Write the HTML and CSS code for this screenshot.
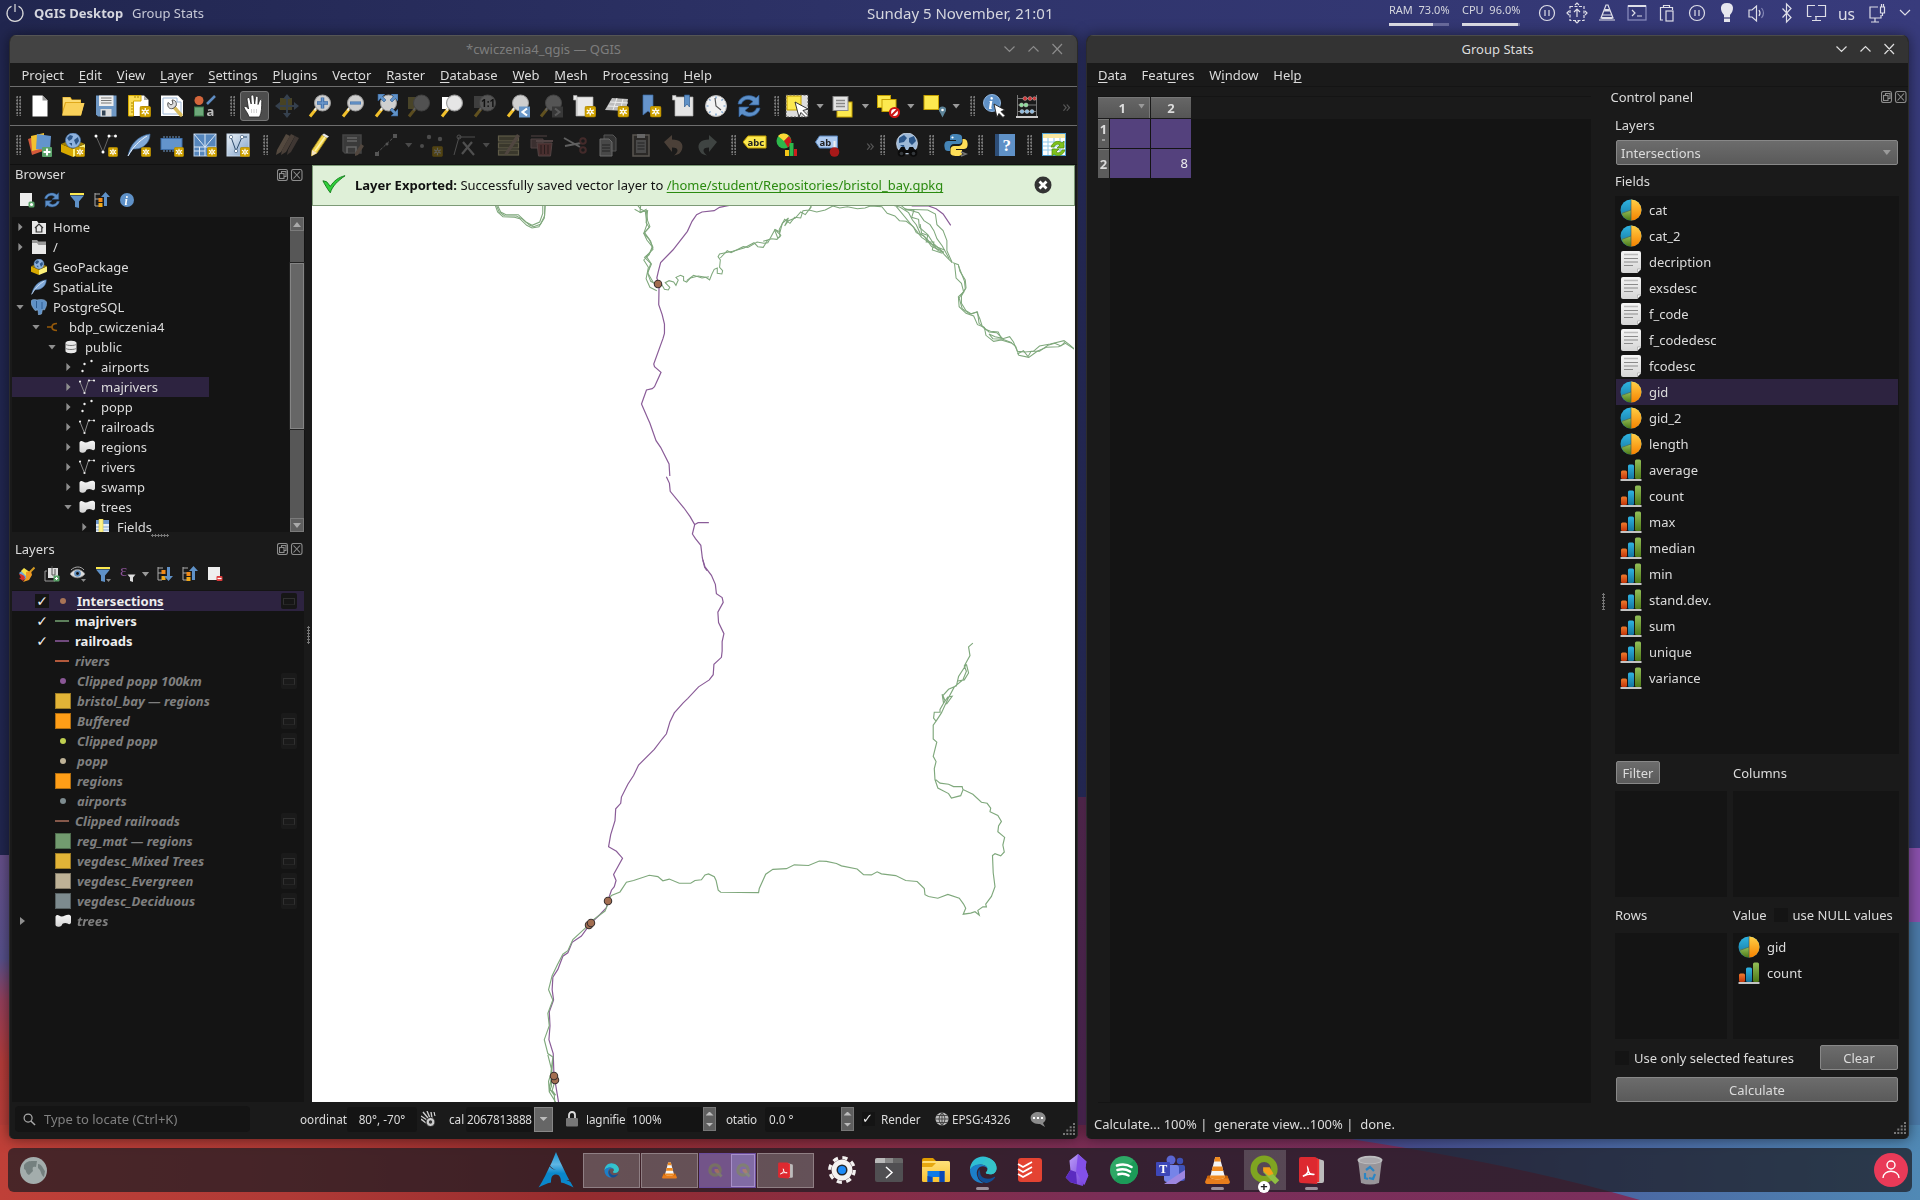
FILE: index.html
```html
<!DOCTYPE html>
<html lang="en">
<head>
<meta charset="utf-8">
<title>Desktop</title>
<link rel="stylesheet" href="styles.css">
</head>
<body>
<svg class="wallpaper" viewBox="0 0 1920 1200" preserveAspectRatio="none">
  <defs>
    <linearGradient id="w1" x1="0" y1="0" x2="1" y2="0"><stop offset="0" stop-color="#21264f"/><stop offset=".5" stop-color="#2f346b"/><stop offset="1" stop-color="#383b7c"/></linearGradient>
    <linearGradient id="w2" x1="0" y1="0" x2="0" y2="1"><stop offset="0" stop-color="#66508a"/><stop offset=".3" stop-color="#57518c"/><stop offset=".42" stop-color="#94405c"/><stop offset=".6" stop-color="#b53c3a"/><stop offset="1" stop-color="#bc4238"/></linearGradient>
    <linearGradient id="w3" x1="0" y1="0" x2="1" y2="0"><stop offset="0" stop-color="#bf4038"/><stop offset=".15" stop-color="#b03a36"/><stop offset=".3" stop-color="#962c2e"/><stop offset=".58" stop-color="#7a2e58"/><stop offset=".85" stop-color="#7b2f5c"/></linearGradient>
    <linearGradient id="w4" x1="0" y1="0" x2="1" y2="0"><stop offset="0" stop-color="#444082"/><stop offset=".5" stop-color="#4a66a2"/><stop offset="1" stop-color="#5089b5"/></linearGradient>
    <linearGradient id="w5" x1="0" y1="0" x2="0" y2="1"><stop offset="0" stop-color="#683263"/><stop offset=".8" stop-color="#5d2f65"/><stop offset="1" stop-color="#702848"/></linearGradient>
    <linearGradient id="pieO" x1="0" y1="0" x2="0" y2="1"><stop offset="0" stop-color="#ffcf45"/><stop offset="1" stop-color="#f58200"/></linearGradient>
    <linearGradient id="pieB" x1="0" y1="0" x2="0" y2="1"><stop offset="0" stop-color="#2fb4e2"/><stop offset="1" stop-color="#14749c"/></linearGradient>
    <linearGradient id="pieG" x1="0" y1="0" x2="0" y2="1"><stop offset="0" stop-color="#93bf58"/><stop offset="1" stop-color="#4d7916"/></linearGradient>
    <linearGradient id="barR" x1="0" y1="0" x2="0" y2="1"><stop offset="0" stop-color="#f07b2c"/><stop offset="1" stop-color="#c2350a"/></linearGradient>
    <linearGradient id="docG" x1="0" y1="0" x2="0" y2="1"><stop offset="0" stop-color="#f5f5f5"/><stop offset="1" stop-color="#d5d5d5"/></linearGradient>
    <linearGradient id="vecG" x1="0" y1="0" x2="1" y2="1"><stop offset="0" stop-color="#eef3f8"/><stop offset="1" stop-color="#7da0c8"/></linearGradient>
    <linearGradient id="obsG" x1="0" y1="0" x2="1" y2="1"><stop offset="0" stop-color="#c3a6fb"/><stop offset="1" stop-color="#6d35d8"/></linearGradient>
    <linearGradient id="folderG" x1="0" y1="0" x2="0" y2="1"><stop offset="0" stop-color="#ffe07a"/><stop offset="1" stop-color="#f9c231"/></linearGradient>
    <linearGradient id="archG" x1="0" y1="0" x2="0" y2="1"><stop offset="0" stop-color="#1793d1"/><stop offset=".35" stop-color="#5fb6e4"/><stop offset=".6" stop-color="#0a87cb"/></linearGradient>

    <symbol id="star" viewBox="0 0 12 12"><rect x=".5" y=".5" width="11" height="11" rx="1.500" fill="#d0a300" stroke="#b58b00"/><path d="M6 2v8M2.300 4l7.400 4M9.700 4l-7.400 4" stroke="#fff" stroke-width="1.300"/><circle cx="6" cy="6" r="2" fill="#fff"/><circle cx="6" cy="6" r="1" fill="#d0a300"/></symbol>
    <symbol id="i-new" viewBox="0 0 24 24"><path d="M4.500 1.500h10l5 5v16h-15z" fill="#fff"/><path d="M14.500 1.500v5h5z" fill="#999"/></symbol>
    <symbol id="i-open" viewBox="0 0 24 24"><path d="M1.500 3h8l1.500 2.500h9v4h3l-3 12H1.500z" fill="#e0a91c"/><path d="M5 9h18.500l-3.500 12.500H1z" fill="#f9d15a"/><path d="M2 3.500h7l1.500 2.500h9V8H4L2 15z" fill="#fbda70"/></symbol>
    <symbol id="i-save" viewBox="0 0 24 24"><path d="M2 1.500h20.500v21H4l-2-2z" fill="#6e97c4"/><rect x="5" y="1.500" width="14.500" height="10.500" fill="#eee"/><path d="M7 4h10.500M7 6.500h10.500M7 9h10.500" stroke="#777"/><rect x="6.500" y="15" width="11" height="7.500" fill="#ddd"/><rect x="8" y="16.500" width="3.500" height="5" fill="#345"/></symbol>
    <symbol id="i-layout" viewBox="0 0 24 24"><path d="M2 1.500h15l4.500 4.500v16H2z" fill="#fff"/><path d="M17 1.500V6h4.500z" fill="#aaa"/><path d="M1.500 1.500H14V7H6.500v15h-5z" fill="#fbdd57" stroke="#d3a700"/><path d="M4 9h2M4 12h2M4 15h2M4 18h2M8 2v2M11 2v2" stroke="#a88500"/><use href="#star" x="12.500" y="12" width="11.500" height="11.500"/></symbol>
    <symbol id="i-manager" viewBox="0 0 24 24"><path d="M1 1.500h17l5 5V22H1z" fill="#fff"/><path d="M3 4h14v4h4v12H3z" fill="none" stroke="#9db7d6"/><path d="M13 12l8 9" stroke="#d8bb5a" stroke-width="3.500" stroke-linecap="round"/><path d="M8 8.500l3 2.500 2-1.500-1-3.500c4 0 5 3 4 6l-3 2.500c-4 1-6-2-5-6z" fill="#ddd" stroke="#555"/></symbol>
    <symbol id="i-style" viewBox="0 0 24 24"><circle cx="6" cy="6.500" r="4.500" fill="#d4663b"/><path d="M22 2l-8 8" stroke="#5f8dc3" stroke-width="2.500"/><rect x="1.500" y="13" width="9" height="9" fill="#6ea87a" stroke="#3f7b4c"/><text x="13.500" y="22" font-size="13" font-weight="bold" font-family="Noto Sans" fill="#bbb">a</text></symbol>
    <symbol id="i-hand" viewBox="0 0 24 24"><path d="M7 23C6 19 3 16 2 13.500c.500-1.500 2.500-1.500 4.500 1.500L5 5c0-2 2.200-2 2.700-.500L9.200 10 9 2.500c.200-2 2.500-2 2.800 0L12.700 10l.800-6.500c.500-2 2.700-1.500 2.600.500L16 10.500l1.500-4c.700-1.500 2.500-1 2.300.700C19.500 13 20 18 17.500 23z" fill="#fff" stroke="#222" stroke-width=".8"/><path d="M9.500 15v4M12 15v4M14.500 15v4" stroke="#bbb" stroke-width=".7"/></symbol>
    <symbol id="i-pansel" viewBox="0 0 24 24"><g opacity=".3"><rect x="5" y="4" width="12" height="12" fill="#b3a13c"/><path d="M12 0l4 5h-8zM12 24l4-5h-8zM0 12l5-4v8zM24 12l-5-4v8z" fill="#7598c4"/><path d="M12 4v16M4 12h16" stroke="#7598c4" stroke-width="2"/></g></symbol>
    <symbol id="mag" viewBox="0 0 24 24"><path d="M8 15l-6 7.500" stroke="#f2c12b" stroke-width="3"/><path d="M9 13l-2.500 3.500" stroke="#eee" stroke-width="2"/><circle cx="14.500" cy="9" r="8" fill="#cfcfcf" stroke="#9a9a9a"/></symbol>
    <symbol id="i-zin" viewBox="0 0 24 24"><use href="#mag"/><path d="M14.500 3.500v11M9 9h11" stroke="#3e6ea8" stroke-width="3.500"/><path d="M14.500 4v10M9.500 9h10" stroke="#6d98cc" stroke-width="1.500"/></symbol>
    <symbol id="i-zout" viewBox="0 0 24 24"><use href="#mag"/><path d="M9 9h11" stroke="#3e6ea8" stroke-width="3"/><path d="M9.500 9h10" stroke="#6d98cc" stroke-width="1.300"/></symbol>
    <symbol id="i-zfull" viewBox="0 0 24 24"><use href="#mag"/><path d="M4 0h7L8.500 2.500 12 6l-2 2-3.500-3.500L4 7zM24 0v7l-2.500-2.500L18 8l-2-2 3.500-3.500L17 0zM24 22h-7l2.500-2.500L16 16l2-2 3.500 3.500L24 15z" fill="#5f91c7" stroke="#2f5d92" stroke-width=".6"/></symbol>
    <symbol id="i-zsel" viewBox="0 0 24 24"><g opacity=".3"><rect x="1" y="3" width="11" height="12" fill="#b5a54a"/><use href="#mag"/></g></symbol>
    <symbol id="i-zlay" viewBox="0 0 24 24"><path d="M2 3h11v12H2z" fill="#fff"/><use href="#mag"/><circle cx="14.500" cy="9" r="7" fill="#e6e6e6"/></symbol>
    <symbol id="i-znat" viewBox="0 0 24 24"><g opacity=".33"><rect x="1" y="2" width="10" height="12" fill="#888"/><use href="#mag"/></g><text x="8" y="13" font-size="10" font-weight="bold" font-family="Noto Sans" fill="#111">1:1</text></symbol>
    <symbol id="i-zlast" viewBox="0 0 24 24"><use href="#mag"/><rect x="13" y="12.500" width="11" height="11" fill="#6a97c8"/><path d="M21 14.500L16.500 18l4.500 3.500" stroke="#fff" stroke-width="2.200" fill="none"/></symbol>
    <symbol id="i-znext" viewBox="0 0 24 24"><g opacity=".33"><use href="#mag"/><rect x="13" y="12.500" width="11" height="11" fill="#777"/><path d="M16 14.500l4.500 3.500-4.500 3.500" stroke="#ddd" stroke-width="2" fill="none"/></g></symbol>
    <symbol id="i-newmap" viewBox="0 0 24 24"><path d="M1.500 1.500h3.500V3h16v19H4V6H1.500z" fill="#e9e9e9" stroke="#aaa" stroke-width=".7"/><path d="M5 3v19" stroke="#bbb"/><use href="#star" x="12.500" y="12" width="11.500" height="11.500"/></symbol>
    <symbol id="i-new3d" viewBox="0 0 24 24"><path d="M7 4l16 1-2 12L0 16z" fill="#bdbdbd"/><path d="M5 8l18 1M3 12l19 1M12 4L8 16M18 5l-3 12" stroke="#eee"/><use href="#star" x="12.500" y="12" width="11.500" height="11.500"/></symbol>
    <symbol id="i-newbm" viewBox="0 0 24 24"><path d="M5 1h10v20l-5-4-5 4z" fill="#6694cb" stroke="#3e6ea8" stroke-width=".7"/><use href="#star" x="12" y="12" width="11.500" height="11.500"/></symbol>
    <symbol id="i-bm" viewBox="0 0 24 24"><path d="M1.500 1.500h3.500V3h17v19H4V6H1.500z" fill="#e4e4e4" stroke="#aaa" stroke-width=".7"/><path d="M13.500 1h5v12L16 10l-2.500 3z" fill="#5f91c7" stroke="#2f5d92" stroke-width=".7"/></symbol>
    <symbol id="i-clock" viewBox="0 0 24 24"><circle cx="12" cy="12" r="10.500" fill="#f2f2f2" stroke="#bbb"/><g stroke="#5f91c7" stroke-width="1.200"><path d="M12 2.500v2M12 19.500v2M2.500 12h2M19.500 12h2M5.300 5.300l1.200 1.200M17.500 17.500l1.200 1.200M18.700 5.300l-1.200 1.200M6.500 17.500l-1.200 1.200"/></g><path d="M11 4l1 8 5 4" fill="none" stroke="#555" stroke-width="1.200"/></symbol>
    <symbol id="i-refresh" viewBox="0 0 24 24"><path d="M1 10C2 2 13-1 19 4l3-3v10H12l4-3.500C12 4 6 5 4.500 10zM23 14c-1 8-12 11-18 6l-3 3V13h10l-4 3.500c4 3.500 10 2.500 11.500-2.500z" fill="#5d90c9" stroke="#2d5a92" stroke-width=".7"/></symbol>
    <symbol id="i-sel" viewBox="0 0 24 24"><rect x="1" y="1" width="22" height="22" fill="#ddd" stroke="#444" stroke-dasharray="2 1.500"/><rect x="2" y="2" width="14" height="14" fill="#fce94f" stroke="#c4a000"/><path d="M10 8l13 7-5 1.500 5 5-2 2-5-5-2 4.500z" fill="#fff" stroke="#222" stroke-width=".9"/></symbol>
    <symbol id="i-selval" viewBox="0 0 24 24"><rect x="6" y="8" width="15" height="15" fill="#fce94f" stroke="#c4a000"/><rect x="2" y="2.500" width="15" height="14" fill="#e3e3e3" stroke="#888"/><path d="M5 6.500h9M5 9.500h9M5 12.500h9" stroke="#888" stroke-width="1.300"/></symbol>
    <symbol id="i-desel" viewBox="0 0 24 24"><rect x="1.500" y="1.500" width="13" height="12" fill="#fce94f" stroke="#c4a000"/><rect x="6" y="5.500" width="14" height="12" fill="#fce94f" stroke="#c4a000"/><circle cx="18.500" cy="18.500" r="4.500" fill="#fff" stroke="#cc1515" stroke-width="2.200"/><path d="M15.500 21.500l6-6" stroke="#cc1515" stroke-width="2"/></symbol>
    <symbol id="i-selloc" viewBox="0 0 24 24"><rect x="2" y="1.500" width="14.500" height="14" fill="#fce94f" stroke="#c4a000"/><path d="M20.500 12.500c4 0 4.500 4 2.500 6L20.500 23.500l-2.500-5c-2-2-1.500-6 2.500-6z" fill="#5d8499"/><circle cx="20.500" cy="16" r="1.300" fill="#fff"/></symbol>
    <symbol id="i-ident" viewBox="0 0 24 24"><circle cx="10" cy="9" r="8.500" fill="#5f91c7" stroke="#8fb4dc"/><text x="6.500" y="15" font-size="16" font-style="italic" font-weight="bold" font-family="Liberation Serif" fill="#fff">i</text><path d="M12 10l11 6-4 1.500 4 4-2 2-4-4-2 4z" fill="#fff" stroke="#222" stroke-width=".9"/></symbol>
    <symbol id="i-abacus" viewBox="0 0 24 24"><path d="M1 23h22" stroke="#ccc" stroke-width="2"/><path d="M2.500 1v21M21.500 1v21M2 4.500h20M2 11h20M2 17.500h20" stroke="#777" fill="none"/><g stroke="#ddd" stroke-width=".4"><g fill="#c33"><circle cx="10" cy="4.500" r="2"/><circle cx="15" cy="4.500" r="2"/><circle cx="19.500" cy="4.500" r="1.800"/></g><g fill="#8ddc9b"><circle cx="6.500" cy="11" r="2"/><circle cx="11" cy="11" r="2"/></g><g fill="#8db8dc"><circle cx="7" cy="17.500" r="2"/><circle cx="12" cy="17.500" r="2"/><circle cx="17" cy="17.500" r="2"/></g></g></symbol>

    <symbol id="i-dsm" viewBox="0 0 24 24"><path d="M0 6l12-4 3 16-11 4z" fill="#d4593a"/><path d="M3 3l13-3v15l-12 3z" fill="#f3c12e"/><path d="M9 1l14 2-1 14-14-1z" fill="#6394cc"/><rect x="14" y="14" width="10" height="10" rx="1" fill="#5ba36a"/><path d="M19 15.500v7M15.500 19h7" stroke="#fff" stroke-width="2"/></symbol>
    <symbol id="cube" viewBox="0 0 24 24"><path d="M0 11l12 5v8L0 19z" fill="#d8a900"/><path d="M24 11l-12 5v8l12-5z" fill="#fcf07a"/><path d="M0 11l12-5 12 5-12 5z" fill="#a37f00"/><circle cx="12" cy="7.500" r="7.500" fill="#8fb3df" stroke="#4a76ab" stroke-width=".7"/><path d="M6 5l3-3 3 1-1 3-3 2zM13 7l4-3 1 4-3 4zM8 10l3 0 0 3z" fill="#2c5587"/></symbol>
    <symbol id="i-gpkg" viewBox="0 0 24 24"><use href="#cube"/><use href="#star" x="14" y="14" width="10" height="10"/></symbol>
    <symbol id="i-shp" viewBox="0 0 24 24"><path d="M2 3l7 16L15 3h7" fill="none" stroke="#777" stroke-width=".8"/><g fill="#fff"><circle cx="2" cy="3" r="1.500"/><circle cx="9" cy="19" r="1.500"/><circle cx="15" cy="3" r="1.500"/><circle cx="21.500" cy="3" r="1.500"/></g><use href="#star" x="14" y="14" width="10" height="10"/></symbol>
    <symbol id="feather" viewBox="0 0 24 24"><path d="M1 23C3 12 10 3 23 1c0 5-2 9-6 12-4 3-8 3-11 3z" fill="#82aad8" stroke="#3c6799" stroke-width=".7"/><path d="M1 23C6 14 12 8 20 3" stroke="#e8f0fa" fill="none"/></symbol>
    <symbol id="i-spl" viewBox="0 0 24 24"><use href="#feather"/><use href="#star" x="14" y="14" width="10" height="10"/></symbol>
    <symbol id="i-mem" viewBox="0 0 24 24"><path d="M4 3v16M7 3v16M10 3v16M13 3v16M16 3v16M19 3v16" stroke="#6d97c6"/><rect x="1" y="5.500" width="21" height="11" fill="#6394cc" stroke="#3e6ea8"/><use href="#star" x="14" y="14" width="10" height="10"/></symbol>
    <symbol id="i-mesh" viewBox="0 0 24 24"><rect x="1" y="1" width="22" height="22" fill="#5586bd" stroke="#b9d0ea"/><path d="M1 14h22M12 1v22M1 1l11 13L23 1M1 18h11M6.500 14v9" stroke="#dce8f5" fill="none"/><use href="#star" x="14" y="14" width="10" height="10"/></symbol>
    <symbol id="i-virt" viewBox="0 0 24 24"><rect x="1" y="1" width="22" height="22" fill="url(#vecG)" stroke="#c8d8ea"/><path d="M5 4l5 14 6-14h5" stroke="#2b4a6b" fill="none"/><g fill="#fff" stroke="#2b4a6b" stroke-width=".6"><circle cx="5" cy="4" r="1.700"/><circle cx="10" cy="18" r="1.700"/><circle cx="16" cy="4" r="1.700"/></g><use href="#star" x="14" y="14" width="10" height="10"/></symbol>
    <symbol id="i-pens" viewBox="0 0 24 24"><path d="M1 22l1-5L11 1l4 2-9 16z" fill="#54493f"/><path d="M6 22l1-5L16 1l4 2-9 16z" fill="#493f38"/><path d="M12 22l1-5 7-14 4 2-8 14z" fill="#3f3733"/></symbol>
    <symbol id="i-pen" viewBox="0 0 24 24"><path d="M4 17L14 2l5 3L9 20l-5.500 3z" fill="#f3d54e" stroke="#a78a1a" stroke-width=".8"/><path d="M7 18L17 4" stroke="#fdf2a8" stroke-width="1.500"/><path d="M14 2l2-1.500 5 3L19 5z" fill="#e8e8e8"/><path d="M4 17l5 3-5.500 3z" fill="#f5e3c0"/></symbol>
    <symbol id="i-saveed" viewBox="0 0 24 24"><g fill="none" stroke="#444" stroke-width="1.500"><path d="M2 2h18v18H4l-2-2z" fill="#3a3a3a"/><path d="M6 5h10M6 8h10" stroke="#666"/><path d="M6 20v-6h9v6" stroke="#666"/></g><path d="M14 20l6-9 3 2-6 9-3 1z" fill="#51463e"/></symbol>
    <symbol id="i-line" viewBox="0 0 24 24"><path d="M3 20L21 3" stroke="#555" stroke-dasharray="3 1.500"/><rect x="1" y="19" width="4" height="4" fill="#555"/><rect x="19" y="1" width="4" height="4" fill="#555"/><circle cx="13" cy="11" r="1.500" fill="#555"/></symbol>
    <symbol id="i-addpt" viewBox="0 0 24 24"><g fill="#4b4b4b"><circle cx="3" cy="13" r="2"/><circle cx="10" cy="4" r="2.200"/><circle cx="21" cy="6" r="2.200"/></g><g opacity=".3"><use href="#star" x="13" y="13" width="11" height="11"/></g></symbol>
    <symbol id="i-vert" viewBox="0 0 24 24"><g stroke="#4f4f4f" fill="none"><path d="M2 22L7 4h16"/><circle cx="7" cy="4" r="2"/><path d="M10 21l10-12M11 9l11 13" stroke-width="2.200"/></g></symbol>
    <symbol id="i-attr" viewBox="0 0 24 24"><g stroke="#5e5a47" fill="#3a382c" stroke-width="1.200"><rect x="1.500" y="3" width="20" height="5"/><rect x="1.500" y="10" width="20" height="5"/><rect x="1.500" y="17" width="20" height="5"/></g><path d="M8 20L20 1l3 2-12 18-4 1z" fill="#504640"/></symbol>
    <symbol id="i-del" viewBox="0 0 24 24"><g fill="#3b3030" stroke="#514343"><path d="M1 3h16M1 6h12v9H1z"/><path d="M7 10h15l-1.500 13h-12z" fill="#4a2f2f"/><path d="M6 8h17" stroke-width="2"/><path d="M11 12v9M14.500 12v9M18 12v9" stroke="#271c1c"/></g></symbol>
    <symbol id="i-cut" viewBox="0 0 24 24"><path d="M1 5l16 9M2 13l16-3" stroke="#606060" stroke-width="2"/><g fill="none" stroke="#432a2a" stroke-width="2"><circle cx="20" cy="8" r="2.800"/><circle cx="20" cy="17" r="2.800"/></g></symbol>
    <symbol id="i-copy" viewBox="0 0 24 24"><path d="M8 2h9l3 3v13H8z" fill="#333" stroke="#555"/><path d="M4 6h9l3 3v14H4z" fill="#484848" stroke="#6a6a6a"/><path d="M6 12h8M6 15h8M6 18h8" stroke="#222"/></symbol>
    <symbol id="i-paste" viewBox="0 0 24 24"><rect x="4" y="2" width="16" height="21" fill="#2b2927" stroke="#5a5650" stroke-width="1.500"/><rect x="8" y="1" width="8" height="4" fill="#666"/><rect x="7" y="7" width="10" height="13" fill="#4a4a4a"/><path d="M8.500 10h7M8.500 13h7M8.500 16h7" stroke="#222"/></symbol>
    <symbol id="i-undo" viewBox="0 0 24 24"><path d="M2 9l8-7v4.500c8 0 12 4 10 10-1 3.500-4 5.500-8 6 4-3 6-8-2-8V19z" fill="#4b4038"/></symbol>
    <symbol id="i-redo" viewBox="0 0 24 24"><path d="M22 9l-8-7v4.500c-8 0-12 4-10 10 1 3.500 4 5.500 8 6-4-3-6-8 2-8V19z" fill="#3f4442"/></symbol>
    <symbol id="i-abc" viewBox="0 0 24 24"><path d="M0 9l5-6h18v12H5z" fill="#fce94f" stroke="#c4a000"/><text x="4.500" y="12.500" font-size="9.500" font-weight="bold" font-family="Noto Sans" fill="#222">abc</text></symbol>
    <symbol id="i-diag" viewBox="0 0 24 24"><circle cx="8" cy="8" r="7.500" fill="#2db84b"/><path d="M8 8L2 3a7.500 7.500 0 0 1 11 0z" fill="#fdd835"/><path d="M8 8l5-5a7.500 7.500 0 0 1-1 11.500z" fill="#cc1c1c"/><rect x="9" y="17" width="4" height="6" fill="#f5c518"/><rect x="13.500" y="10" width="4" height="13" fill="#2db84b"/><rect x="18" y="16" width="3" height="7" fill="#cc1c1c"/></symbol>
    <symbol id="i-abpin" viewBox="0 0 24 24"><path d="M0 9l4-6h18v12H4z" fill="#aecbf0" stroke="#5580b5"/><text x="4" y="12.500" font-size="9.500" font-weight="bold" font-family="Noto Sans" fill="#222">ab</text><path d="M19 8v10" stroke="#eee" stroke-width="2"/><circle cx="19" cy="19" r="4.800" fill="#a81919"/></symbol>
    <symbol id="i-meta" viewBox="0 0 24 24"><circle cx="12" cy="10.500" r="10.500" fill="#9db9d8" stroke="#dce6f2" stroke-width=".7"/><path d="M4 5l5-3 3 3-3 4-5 1zM14 5l5-2 2 5-4 4-3-3zM5 12l4 0 1 4z" fill="#2b5689"/><g fill="#0b0b0b"><circle cx="6.500" cy="20" r="3.800"/><circle cx="18.500" cy="20" r="3.800"/><path d="M6 14h3.500l1.500 3h2l1.500-3H18l3 5-5 3-3-2h-2l-3 2-5-3z"/></g><circle cx="6.500" cy="20.500" r="1.800" fill="#34383c"/><circle cx="18.500" cy="20.500" r="1.800" fill="#34383c"/></symbol>
    <symbol id="i-py" viewBox="0 0 24 24"><path d="M11 1c-5 0-5 2-5 3v3h6v1H4c-3 0-4 3-3.500 6 .300 3 1.500 4 3.500 4h2v-3c0-2 1.500-4 4-4h5c2 0 3-1.500 3-3V4c0-2-2-3-7-3z" fill="#4584b6"/><path d="M13 23c5 0 5-2 5-3v-3h-6v-1h8c3 0 4-3 3.500-6-.500-3-1.500-4-3.500-4h-1.500v3c0 2-1.500 4-4 4H10c-2 0-3.500 1.500-3.500 3v4c0 2 2 3 6.500 3z" fill="#ffde57"/><circle cx="8.500" cy="4.500" r="1.100" fill="#fff"/><path d="M17 19l5 2-5 2" stroke="#777" stroke-width="1.500" fill="none"/></symbol>
    <symbol id="i-help" viewBox="0 0 24 24"><rect x="2" y="1" width="4" height="22" fill="#2d4e78"/><rect x="6" y="1" width="16" height="22" fill="#5f91c7"/><text x="9.500" y="18" font-size="17" font-weight="bold" font-family="Liberation Serif" fill="#fff">?</text></symbol>
    <symbol id="i-gs" viewBox="0 0 24 24"><rect x=".5" y=".5" width="23" height="22" fill="#fff" stroke="#4e9fd4"/><rect x="1" y="1" width="22" height="4" fill="#f8e7a0"/><path d="M1 9h22M1 13h22M1 17h22M6 5v17M12 5v17M18 5v17" stroke="#8fc7e8"/><path d="M9 14c2-6 8-7 11-4l2-2v7h-7l3-3c-3-2-5 0-6 2zM23 17c-2 6-8 7-11 4l-2 2v-7h7l-3 3c3 2 5 0 6-2z" fill="#7fc31c" stroke="#4e8a0b" stroke-width=".7"/></symbol>

    <symbol id="s-add" viewBox="0 0 16 16"><rect x="1" y="1" width="12" height="13" fill="#eee"/><rect x="9.500" y="9.500" width="6" height="6" rx="1.500" fill="#5ba36a"/><circle cx="12.500" cy="12.500" r="1.500" fill="#fff"/></symbol>
    <symbol id="s-filter" viewBox="0 0 16 16"><path d="M1 1h14v2H1z" fill="#fce94f"/><path d="M1 3.500h14l-5 6V16l-4-1V9.500z" fill="#5f91c7"/></symbol>
    <symbol id="s-collapse" viewBox="0 0 16 16"><path d="M1 1v13h4M1 7h4M1 2h5" stroke="#aaa" fill="none"/><rect x="4.500" y="6" width="4" height="4" fill="#f08a18"/><rect x="4.500" y="11" width="4" height="4" fill="#f0a818"/><path d="M11.500 0L16 5h-3v9h-3V5H7z" fill="#5f91c7"/></symbol>
    <symbol id="s-expand" viewBox="0 0 16 16"><path d="M1 1v13h4M1 7h4M1 2h5" stroke="#aaa" fill="none"/><rect x="4.500" y="4" width="4" height="4" fill="#f08a18"/><rect x="4.500" y="10" width="4" height="4" fill="#f0a818"/><path d="M11.500 15L7 10h3V1h3v9h3z" fill="#5f91c7"/></symbol>
    <symbol id="s-info" viewBox="0 0 16 16"><circle cx="8" cy="8" r="7" fill="#5f91c7"/><text x="5.500" y="12.500" font-size="12" font-style="italic" font-weight="bold" font-family="Liberation Serif" fill="#fff">i</text></symbol>
    <symbol id="s-brush" viewBox="0 0 16 16"><path d="M0 7l4-3 5 4-3 6z" fill="#6ea8dc"/><path d="M2 5l3-3 7 5-3 5z" fill="#f7e24a"/><path d="M0 8c3 0 6 2 6 4l-2 3-4-3 2-.500z" fill="#d8312a"/><path d="M11 6l4.500-4.500" stroke="#d39a23" stroke-width="2"/><path d="M7 6l5-1 1 4-3 5-6 2 3-4z" fill="#ee9b23"/></symbol>
    <symbol id="s-group" viewBox="0 0 16 16"><path d="M3 5H1v10h10" fill="none" stroke="#999"/><rect x="4" y="2" width="10" height="10" fill="#ddd"/><path d="M8 0v9h3V3" stroke="#555" fill="none"/><rect x="9.500" y="9.500" width="6" height="6" rx="1" fill="#5ba36a"/><path d="M12.500 11v3M11 12.500h3" stroke="#fff"/></symbol>
    <symbol id="s-eye" viewBox="0 0 16 16"><path d="M0 8c4-6 11-6 15 0-4 5-11 5-15 0z" fill="#ddd" stroke="#888" stroke-width=".8"/><circle cx="7.500" cy="7.500" r="3.300" fill="#5f8fc0"/><circle cx="7.500" cy="7.500" r="1.400" fill="#111"/><path d="M1 4c4-4 10-4 13 0" stroke="#aaa" fill="none"/><path d="M11 13h5l-2.500 3z" fill="#888"/></symbol>
    <symbol id="s-filterd" viewBox="0 0 16 16"><use href="#s-filter"/><path d="M11 13h5l-2.500 3z" fill="#888"/></symbol>
    <symbol id="s-eps" viewBox="0 0 16 16"><text x="0" y="10" font-size="17" font-family="Liberation Serif" fill="#8a5296">ε</text><path d="M7.500 8.500h8l-2.500 3v4.500l-3-1v-3.500z" fill="#ddd"/></symbol>
    <symbol id="s-remove" viewBox="0 0 16 16"><rect x="1" y="1" width="12" height="13" fill="#eee"/><rect x="9.500" y="10" width="6" height="5" rx="1" fill="#dc3a3a"/><path d="M10.500 12.500h4" stroke="#fff" stroke-width="1.300"/></symbol>

    <symbol id="t-home" viewBox="0 0 16 16"><path d="M1 2h5l1.500 2H15v11H1z" fill="#e8e8e8"/><path d="M4 9l4-4 4 4M5.200 8.500V13h5.600V8.500" fill="none" stroke="#333" stroke-width="1.200"/></symbol>
    <symbol id="t-fold" viewBox="0 0 16 16"><path d="M1 1h5l1.500 1.500H15V6H1z" fill="#999"/><path d="M1 4h5l1.500 2H15v9H1z" fill="#e8e8e8"/></symbol>
    <symbol id="t-pg" viewBox="0 0 16 16"><path d="M0 3c0-3 4-3 6-2 3-1 8-1 9.500 2 .800 3-1 6-2 8l-2-.500L10.500 15 7.500 16 7 11l-3 .500C2 9 0 6 0 3z" fill="#5f91c7" stroke="#9cc0e4" stroke-width=".5"/><path d="M5.500 2v7M11 3v7" stroke="#2e5d93" fill="none"/></symbol>
    <symbol id="t-conn" viewBox="0 0 16 16"><path d="M-1 8h6M10 4.500C7 4.500 5 6 5 8s2 3.500 5 3.500" fill="none" stroke="#95590a" stroke-width="1.700"/></symbol>
    <symbol id="t-db" viewBox="0 0 16 16"><path d="M2.500 4c0-3 11-3 11 0v8c0 3-11 3-11 0z" fill="#e8e8e8"/><path d="M2.500 5c1 2 10 2 11 0M2.500 9c1 2 10 2 11 0" stroke="#777" fill="none"/></symbol>
    <symbol id="t-pt" viewBox="0 0 16 16"><g fill="#eee"><circle cx="3.500" cy="12" r="1.200"/><circle cx="5.500" cy="5" r="1.200"/><circle cx="12.500" cy="2" r="1.200"/></g></symbol>
    <symbol id="t-ln" viewBox="0 0 16 16"><path d="M1 3l4.500 11 4-12.500h6" fill="none" stroke="#999" stroke-width=".9"/><g fill="#eee"><circle cx="1" cy="2.500" r="1.100"/><circle cx="5.500" cy="14" r="1.100"/><circle cx="10" cy="1.500" r="1.100"/><circle cx="15" cy="1.500" r="1.100"/></g></symbol>
    <symbol id="t-pg2" viewBox="0 0 16 16"><path d="M.5 3.500C1 2 2.500 1.500 4 2.500c2 1.500 4 1 6 0 2-1 5.500-1.500 6 1v6c-.5 2-2 2-3.500 1-1.500-.8-3-.8-4.500 0-1 .5-1 2.500-3 3-2 .3-4 .5-4.500-1.500z" fill="url(#docG)"/></symbol>
    <symbol id="t-fields" viewBox="0 0 16 16"><rect x="1" y="1" width="13" height="14" fill="#e8eef6"/><rect x="1" y="1" width="13" height="4" fill="#6f9ad0"/><path d="M1 8h13M1 11h13" stroke="#7fa5d6"/><rect x="4" y="0" width="4" height="15" fill="#fdf188" stroke="#e0c840" stroke-width=".6"/></symbol>

    <symbol id="g-pie" viewBox="0 0 22 22"><circle cx="11" cy="11" r="10.500" fill="url(#pieB)"/><path d="M11 11v10.500A10.500 10.500 0 0 1 1.500 14z" fill="url(#pieG)"/><path d="M11 .5a10.500 10.500 0 0 1 0 21z" fill="url(#pieO)"/><path d="M11 .5v21M11 11l-9.500 3.500" stroke="#3b5560" stroke-width=".6"/></symbol>
    <symbol id="g-bar" viewBox="0 0 22 22"><path d="M.5 21h21" stroke="#fff" stroke-width="1.500"/><rect x="1" y="11.500" width="6" height="8.500" rx="1.500" fill="url(#barR)"/><rect x="8" y="5.500" width="6" height="14.500" rx="1.500" fill="url(#pieB)"/><rect x="15" y=".5" width="6" height="19.500" rx="1.500" fill="url(#pieG)"/></symbol>
    <symbol id="g-doc" viewBox="0 0 22 22"><path d="M3 0h16q2 0 2 2V18.500l-3.500 3.500H3q-2 0-2-2v-18q0-2 2-2z" fill="url(#docG)"/><path d="M4 3.500h14" stroke="#bbb" stroke-width="1.500"/><path d="M4 7.500h14M4 11h14M4 14.500h9" stroke="#8a8a8a"/><path d="M17.500 21.500V18H21z" fill="#fff" stroke="#999" stroke-width=".6"/></symbol>
    <symbol id="vlc" viewBox="0 0 28 32"><path d="M3 22h22l3 7q0 2-2 2H2q-2 0-2-2z" fill="#e87d1c"/><path d="M3 22h22l1 3H2z" fill="#c96306"/><path d="M11.500 1h5l6 23q-8.500 4-17 0z" fill="#f5f5f5"/><path d="M11.500 1h5l1.300 5h-7.600zM8.700 11.500h10.600l1.300 5H7.400zM6.100 21.500h15.800l.600 2.500q-8.500 4-17 0z" fill="#f08a1f"/></symbol>
    <symbol id="edge" viewBox="0 0 30 30"><path d="M1 15C1 6 8 .5 15 .5S29.500 6 29.500 13c0 4-3 6.500-7 6.500-3 0-4.500-1-4.500-1.500s2-1.500 2-4c0-2.500-3-5-7-5-6 0-10 3-12 6z" fill="#2fbfd3"/><path d="M20 2c6 2 9.500 6 9.500 11 0 4-3 6.500-7 6.500-3 0-4.500-1-4.500-1.500s2-1.500 2-4c0-3-3-5-7-5z" fill="#35c3c9"/><path d="M1 15c1-4 6-6 11-6 5 0 8 2.500 8 5-1-2-3-3-5-3-5 0-8 5-6 11 1 4 4 6 7 7C7 30 1 23 1 15z" fill="#1c7fc9"/><path d="M11 14c-4 6 0 14 7 15 4 0 8-3 10-6 0-1-1-1-2 0-6 3-14 1-14-5z" fill="#114f96"/></symbol>
    <symbol id="qgis" viewBox="0 0 32 32"><circle cx="15" cy="15" r="11" fill="none" stroke="#7fa521" stroke-width="7"/><path d="M16 16l13 13" stroke="#8fbf43" stroke-width="6"/><path d="M14 13h7l4 7-5 2-6-5z" fill="#f4a018"/></symbol>
    <symbol id="pdf" viewBox="0 0 26 30"><path d="M17 2l7 2q2 0 2 2v20q0 2-2 2h-7z" fill="#bcbcbc"/><path d="M19 3v24" stroke="#e33" stroke-width="4"/><path d="M2 1h14q3 0 3 3v25l-17-1q-2 0-2-2V3q0-2 2-2z" fill="#dd2930"/><path d="M4 21c5-2 7-6 5-9 0 5 3 8 7 7-4-1-8 0-12 2z" fill="none" stroke="#fff" stroke-width="1.500"/></symbol>
  </defs>
  <rect width="1920" height="1200" fill="url(#w1)"/>
  <rect y="855" width="500" height="345" fill="url(#w2)"/>
  <rect x="1000" y="797" width="100" height="403" fill="url(#w5)"/>
  <path d="M0 1125H1300Q1450 1150 1920 1250H0z" fill="url(#w3)"/>
  <rect x="1900" y="848" width="20" height="75" fill="#8b51ad"/>
  <rect x="1900" y="922" width="20" height="278" fill="#4b7aa8"/>
  <path d="M1300 1125h620v75h-280q-120-35-290-61z" fill="url(#w4)"/>
</svg>

<header class="panel">
  <svg class="power" viewBox="0 0 20 20"><path d="M6.500 3.200a8 8 0 1 0 7 0M10 1v8" fill="none" stroke="#ddd" stroke-width="1.200"/></svg>
  <b>QGIS Desktop</b><span class="sub">Group Stats</span>
  <span class="date">Sunday 5 November, 21:01</span>
  <div class="tray">
    <div class="meter"><span>RAM&nbsp; 73.0%</span><i><em style="width:73%"></em></i></div>
    <div class="meter cpu"><span>CPU&nbsp; 96.0%</span><i><em style="width:96%"></em></i></div>
    <svg class="trayicons" viewBox="1532 0 388 28" fill="none" stroke="#dedee8" stroke-width="1.200">
      <circle cx="1547" cy="13" r="7.500"/><path d="M1545 10v6M1549 10v6"/>
      <rect x="1570" y="6.500" width="14" height="14" stroke-dasharray="3 1.500"/><path d="M1577 17v-7M1574 12l3-3 3 3M1575 5l2-2 2 2M1575 21l2 2 2-2M1569 11l-2 2 2 2M1585 11l2 2-2 2"/>
      <path d="M1599 20h16M1601 18l5-13h2l5 13zM1604 11h6M1602.500 15h9"/><path d="M1601.500 18h11M1604.500 10h5" stroke-width="2"/>
      <rect x="1628" y="6" width="18" height="14" stroke="#8d90c0"/><path d="M1628 6h18" stroke-width="2"/><path d="M1632 10l3 3-3 3M1637 16h5"/>
      <path d="M1663 20h-2.500V7.500h12V10"/><path d="M1663.500 8V5.500h6V8"/><rect x="1666" y="11" width="7" height="10"/>
      <circle cx="1697" cy="13" r="7.500"/><path d="M1695 10v6M1699 10v6"/>
      <path d="M1727 3c-8 0-7 8-3 12v7h6v-7c4-4 5-12-3-12z" fill="#e6e6ee" stroke="none"/><path d="M1724 18h6" stroke="#373a77"/>
      <path d="M1749 10h3l4.500-4v15l-4.500-4h-3zM1759 10q2 3 0 6"/><path d="M1761.500 8q4 5 0 10" stroke="#8386b5"/>
      <path d="M1782.500 8.500l8.500 9-4.500 4.500V4l4.500 4.500-8.500 9"/>
      <path d="M1815 5.500h-7.500v11h4M1818 5.500h7.500v11H1815M1816 16.500v4M1812 20.500h9"/>
      <path d="M1878 7h-8v11h11v-3M1875 18v4M1871 22h8M1880.500 7h4v6h-4zM1882.500 13v3M1881.500 4v3M1883.500 4v3"/>
      <path d="M1900 10l5 5 5-5"/>
      <text x="1838" y="19.500" font-size="15.500" font-family="Noto Sans" fill="#dedee8" stroke="none">us</text>
    </svg>
  </div>
</header>

<main class="desk">
<section class="win qgis">
  <div class="title dim"><span>*cwiczenia4_qgis — QGIS</span>
    <svg class="wbtns" viewBox="0 0 62 14"><path d="M1.500 4.500l5 5 5-5M25.500 9.500l5-5 5 5M49.500 2l9.500 10M59 2l-9.500 10"/></svg></div>
  <nav class="menu"><span>Pro<u>j</u>ect</span><span><u>E</u>dit</span><span><u>V</u>iew</span><span><u>L</u>ayer</span><span><u>S</u>ettings</span><span><u>P</u>lugins</span><span>Vect<u>o</u>r</span><span><u>R</u>aster</span><span><u>D</u>atabase</span><span><u>W</u>eb</span><span><u>M</u>esh</span><span>Pro<u>c</u>essing</span><span><u>H</u>elp</span></nav>
  <div class="bar">
    <i class="grip first"></i><svg><use href="#i-new"/></svg><svg><use href="#i-open"/></svg><svg><use href="#i-save"/></svg><svg><use href="#i-layout"/></svg><svg><use href="#i-manager"/></svg><svg><use href="#i-style"/></svg>
    <i class="grip"></i><b class="on"><svg><use href="#i-hand"/></svg></b><svg><use href="#i-pansel"/></svg><svg><use href="#i-zin"/></svg><svg><use href="#i-zout"/></svg><svg><use href="#i-zfull"/></svg><svg><use href="#i-zsel"/></svg><svg><use href="#i-zlay"/></svg><svg><use href="#i-znat"/></svg><svg><use href="#i-zlast"/></svg><svg><use href="#i-znext"/></svg><svg><use href="#i-newmap"/></svg><svg><use href="#i-new3d"/></svg><svg><use href="#i-newbm"/></svg><svg><use href="#i-bm"/></svg><svg><use href="#i-clock"/></svg><svg><use href="#i-refresh"/></svg>
    <i class="grip snug"></i><svg><use href="#i-sel"/></svg><i class="dd"></i><svg><use href="#i-selval"/></svg><i class="dd"></i><svg><use href="#i-desel"/></svg><i class="dd"></i><svg><use href="#i-selloc"/></svg><i class="dd"></i>
    <i class="grip snug"></i><svg><use href="#i-ident"/></svg><svg><use href="#i-abacus"/></svg><span class="more m1">»</span>
  </div>
  <div class="bar">
    <i class="grip first"></i><svg><use href="#i-dsm"/></svg><svg><use href="#i-gpkg"/></svg><svg><use href="#i-shp"/></svg><svg><use href="#i-spl"/></svg><svg><use href="#i-mem"/></svg><svg><use href="#i-mesh"/></svg><svg><use href="#i-virt"/></svg>
    <i class="grip"></i><svg><use href="#i-pens"/></svg><svg><use href="#i-pen"/></svg><svg><use href="#i-saveed"/></svg><svg><use href="#i-line"/></svg><i class="dd off"></i><svg><use href="#i-addpt"/></svg><svg><use href="#i-vert"/></svg><i class="dd off"></i><svg><use href="#i-attr"/></svg><svg><use href="#i-del"/></svg><svg><use href="#i-cut"/></svg><svg><use href="#i-copy"/></svg><svg><use href="#i-paste"/></svg><svg><use href="#i-undo"/></svg><svg><use href="#i-redo"/></svg>
    <i class="grip snug"></i><svg><use href="#i-abc"/></svg><svg><use href="#i-diag"/></svg><svg class="wide"><use href="#i-abpin"/></svg><span class="more m2">»</span>
    <i class="grip"></i><svg><use href="#i-meta"/></svg><i class="grip"></i><svg><use href="#i-py"/></svg><i class="grip"></i><svg><use href="#i-help"/></svg><i class="grip"></i><svg class="last"><use href="#i-gs"/></svg>
  </div>
  <div class="work">
    <aside>
      <div class="dockhead">Browser<svg class="dbtn" viewBox="0 0 26 12"><g><rect x=".5" y=".5" width="10" height="11" rx="2"/><rect x="2.500" y="4.500" width="4.500" height="5"/><path d="M4.500 4.500v-2h4.500v5h-2"/><rect x="14.500" y=".5" width="10.500" height="11" rx="2"/><path d="M16.500 2.500l6.500 7M23 2.500l-6.500 7"/></g></svg></div>
      <div class="minibar"><svg><use href="#s-add"/></svg><svg><use href="#i-refresh"/></svg><svg><use href="#s-filter"/></svg><svg><use href="#s-collapse"/></svg><svg><use href="#s-info"/></svg></div>
      <div class="browser">
        <div class="tree">
          <div class="r c"><svg><use href="#t-home"/></svg>Home</div>
          <div class="r c"><svg><use href="#t-fold"/></svg>/</div>
          <div class="r"><svg><use href="#cube"/></svg>GeoPackage</div>
          <div class="r"><svg><use href="#feather"/></svg>SpatiaLite</div>
          <div class="r o"><svg><use href="#t-pg"/></svg>PostgreSQL</div>
          <div class="r in1 o"><svg><use href="#t-conn"/></svg>bdp_cwiczenia4</div>
          <div class="r in2 o"><svg><use href="#t-db"/></svg>public</div>
          <div class="r in3 c"><svg><use href="#t-pt"/></svg>airports</div>
          <div class="r in3 c sel"><svg><use href="#t-ln"/></svg>majrivers</div>
          <div class="r in3 c"><svg><use href="#t-pt"/></svg>popp</div>
          <div class="r in3 c"><svg><use href="#t-ln"/></svg>railroads</div>
          <div class="r in3 c"><svg><use href="#t-pg2"/></svg>regions</div>
          <div class="r in3 c"><svg><use href="#t-ln"/></svg>rivers</div>
          <div class="r in3 c"><svg><use href="#t-pg2"/></svg>swamp</div>
          <div class="r in3 o"><svg><use href="#t-pg2"/></svg>trees</div>
          <div class="r in4 c"><svg><use href="#t-fields"/></svg>Fields</div>
        </div>
        <div class="scroll"><b class="up"></b><i></i><b class="down"></b></div>
      </div>
      <div class="hdots"></div>
      <div class="dockhead lay">Layers<svg class="dbtn" viewBox="0 0 26 12"><g><rect x=".5" y=".5" width="10" height="11" rx="2"/><rect x="2.500" y="4.500" width="4.500" height="5"/><path d="M4.500 4.500v-2h4.500v5h-2"/><rect x="14.500" y=".5" width="10.500" height="11" rx="2"/><path d="M16.500 2.500l6.500 7M23 2.500l-6.500 7"/></g></svg></div>
      <div class="minibar lay"><svg><use href="#s-brush"/></svg><svg><use href="#s-group"/></svg><svg><use href="#s-eye"/></svg><svg><use href="#s-filterd"/></svg><svg><use href="#s-eps"/></svg><i class="dd"></i><svg><use href="#s-expand"/></svg><svg><use href="#s-collapse"/></svg><svg><use href="#s-remove"/></svg></div>
      <div class="layers">
        <div class="y on cur"><s>✓</s><i class="pt" style="background:#a87456"></i><span>Intersections</span><em></em></div>
        <div class="y on"><s>✓</s><i class="ln" style="background:#5d7f5b"></i><span>majrivers</span></div>
        <div class="y on"><s>✓</s><i class="ln" style="background:#704a7d"></i><span>railroads</span></div>
        <div class="y"><s></s><i class="ln" style="background:#b2593c"></i><span>rivers</span></div>
        <div class="y"><s></s><i class="pt" style="background:#8a5796"></i><span>Clipped popp 100km</span><em></em></div>
        <div class="y"><s></s><i class="sq" style="background:#e2b437"></i><span>bristol_bay — regions</span></div>
        <div class="y"><s></s><i class="sq" style="background:#ff9e17"></i><span>Buffered</span><em></em></div>
        <div class="y"><s></s><i class="pt" style="background:#bfcf50"></i><span>Clipped popp</span><em></em></div>
        <div class="y"><s></s><i class="pt" style="background:#beb297"></i><span>popp</span></div>
        <div class="y"><s></s><i class="sq" style="background:#ff9e17"></i><span>regions</span></div>
        <div class="y"><s></s><i class="pt" style="background:#7d8b8f"></i><span>airports</span></div>
        <div class="y"><s></s><i class="ln" style="background:#85584a"></i><span>Clipped railroads</span><em></em></div>
        <div class="y"><s></s><i class="sq" style="background:#729b6f"></i><span>reg_mat — regions</span></div>
        <div class="y"><s></s><i class="sq" style="background:#e2b437"></i><span>vegdesc_Mixed Trees</span><em></em></div>
        <div class="y"><s></s><i class="sq" style="background:#beb297"></i><span>vegdesc_Evergreen</span><em></em></div>
        <div class="y"><s></s><i class="sq" style="background:#7d8b8f"></i><span>vegdesc_Deciduous</span><em></em></div>
        <div class="y tree1"><s></s><svg><use href="#t-pg2"/></svg><span>trees</span></div>
      </div>
    </aside>
    <div class="vdots"></div>
    <div class="canvas">
      <div class="msg"><svg class="ok" viewBox="0 0 26 20"><path d="M1 6l4 1 4 5C13 6 18 2 25 .5 17 6 11 12 9 19 6 15 3 10 1 6z" fill="#2fd03a" stroke="#0f7a17"/></svg><b>Layer Exported:</b>&nbsp;Successfully saved vector layer to&nbsp;<u>/home/student/Repositories/bristol_bay.gpkg</u><svg class="x" viewBox="0 0 18 18"><circle cx="9" cy="9" r="8.500" fill="#333"/><path d="M5.500 5.500l7 7M12.500 5.500l-7 7" stroke="#fff" stroke-width="2.800"/></svg></div>
      <svg class="map" viewBox="312 206 762 896">
        <g fill="none" stroke="#7fa87c" stroke-width="1.050" transform="translate(480 190) scale(.3827 .33333)">
          <path d="M40 46l6 20 14 14 30 2 14 4 18 20 14 8 18-4 14-26 2-38"/>
          <path d="M46 46l8 20 14 8 32 0 20 22 16 10 20-10 8-26 0-26"/>
          <path d="M43 46l7 20 14 11 31 1 17 10 18 18 10 4 18-7 11-26 1-32"/>
          <path d="M404 58l16 10 14-10 4 34 6 18-16 20 8 20 14 20-8 24-14 16 12 22-6 34 10 26 18 10"/>
          <path d="M412 46l8 12 12 6 4 40-8 26 14 18 10 24-10 20-12 10 16 18-8 30 8 24 14 8"/>
          <path d="M420 46l-2 20 20-4-4 36 8 14-12 16 16 26 6 24-18 20 14 24-10 26 16 32"/>
          <path d="M474 282L482 298 492 300 496 292 484 278 494 272 506 276 512 286 518 270 512 262 524 256 532 260 532 272 540 276 550 264 570 258 590 262 600 270 606 252 612 238 620 234 620 250 632 252 634 242 626 232 628 210 622 200 626 192 660 184 690 174 716 158 726 170 740 172 752 150 740 154 762 146 776 148 786 136 770 118 784 126 790 100 806 84 796 108 806 92 824 84 838 66 850 74 866 50"/>
          <path d="M540 272L558 256 580 264 598 260M628 204L646 182 656 188 688 170 700 172 724 156 742 160 752 158 770 120 778 144 784 140 782 118 796 88 810 100 822 82 838 84 844 62 860 60 866 46"/>
          <path d="M860 60l20 6 22-6 20-12 18 6 20-4 26 6 20-2 14-6 30 2 14 20 20 8 12 14 18 2 18 16 12 18 10 14 18 14 20 14 22 10"/>
          <path d="M1080 46l18 6 22 16 10 22 10 14 10 26 14 12 16 20 18 20 14 4"/>
          <path d="M1100 46l14 14 20 0-6 22 18 6 2 24 22 22 16 28 26 26"/>
          <path d="M1110 56l36 12 14 24 16 12 10 18 8 24 14 22 18 38"/>
          <path d="M1112 58l58 2 20 12 4 32 16 18 10 30 0 30 14 36"/>
          <path d="M1088 50l46 64 6 14 20 10 20 32 22 10 18 22 14 16"/>
          <path d="M1150 102l4 28 16 6-4 20 20 0-4 24 26 10"/>
          <path d="M1236 218L1250 224 1254 244 1268 270 1270 294 1258 318 1258 340 1270 362 1284 372 1298 366 1306 386 1312 408 1330 426 1350 428 1366 446 1384 440 1394 456 1404 484 1424 486 1446 484 1462 468 1490 462 1526 452 1540 464 1554 478"/>
          <path d="M1240 222L1244 264 1258 280 1264 306 1250 320 1252 350 1270 370 1290 378 1300 404 1318 412 1322 436 1342 454 1362 450 1390 460 1400 470 1408 496 1434 502 1456 484 1480 472 1512 470 1530 460 1554 478"/>
          <path d="M1250 226L1266 274 1268 296 1252 324 1260 356 1280 372 1300 366 1304 400 1320 418 1334 424 1354 426 1362 444 1346 440 1330 432 1340 446 1366 448 1390 458M1404 492L1420 482 1432 500 1440 484 1462 484 1484 466 1502 460 1518 468 1530 454"/>
        </g>
        <g fill="none" stroke="#8a5c98" stroke-width="1.200" transform="translate(480 190) scale(.3827 .33333)">
          <path d="M652 46L626 52 612 62 580 66 566 74 554 94 542 124 504 180 472 218 466 244 462 264 468 282 467 344 476 374 482 402 482 430 478 446 454 522 456 530 473 547 456 590 450 596 435 600 422 642 444 700 460 752 472 772 494 822 496 858M487 860l8 20 2 24 36 50 16 26 12 24-6 28 8 14 14 20 4 38 6 28 6 10M560 1004l10-6 28 0M1128 48l44 0 20 8 18 16 20 34"/>
        </g>
        <g fill="none" transform="translate(520 560) scale(.35714 .34758)">
          <path stroke="#8a5c98" stroke-width="1.200" d="M512 0L518 20 536 44 547 70 550 97 566 108 569 122 554 150 556 180 571 212 566 235 566 262 564 280 543 300 541 330 530 345 500 365 470 398 457 411 432 440 420 465 410 500 398 515 376 545 332 590 318 620 302 645 284 682 282 700 268 716 266 750 254 790 248 825 270 838 287 858 262 905 269 922 264 940 256 950 246 980 242 1000 224 1020 198 1045 172 1082 146 1100 134 1130 120 1140 106 1178 92 1200 90 1236 94 1266 82 1300 84 1340 81 1380 93 1420 95 1480 108 1560"/>
          <path stroke="#7fa87c" stroke-width="1.150" d="M246 980L256 965 280 955 298 927 318 922 362 907 386 911 400 923 418 918 446 930 478 930 490 922 508 920 518 906 528 903 544 911 549 922 555 950 562 956 668 957 670 945 688 904 708 890 746 888 768 877 808 879 838 866 858 867 886 873 900 880 944 889 962 905 984 906 1000 897 1012 903 1052 908 1080 922 1112 925 1132 945 1134 963 1144 968 1170 973 1198 962 1230 973 1242 990 1248 1002 1241 1019 1262 1016 1274 1012 1286 1022 1282 1008 1296 998 1306 998 1304 990 1320 968 1330 940 1325 900 1323 850 1330 845 1346 851 1356 840 1352 820 1357 798 1338 782 1340 765 1348 752 1338 735 1316 724 1318 714 1308 700 1292 697 1268 674 1240 660 1238 652 1214 652 1200 645 1176 642 1164 632M1240 662L1234 678 1208 685 1200 672 1170 656 1162 632 1160 600 1165 580 1157 565 1167 524 1157 515 1157 475 1166 462 1180 440 1198 400 1216 365 1240 345 1250 320 1244 305 1252 290 1260 275 1256 250 1268 239M1166 465L1158 455 1160 438 1176 438 1176 430 1190 405 1184 390 1200 372 1222 362 1228 335 1250 300M1182 386L1186 412 1198 394 1210 392 1194 415M1250 300L1256 325 1244 345 1226 348"/>
          <path stroke="#7fa87c" stroke-width="1.150" d="M246 990L238 1010 204 1036 182 1060 148 1092 134 1124 120 1134 104 1166 90 1196 80 1236 92 1266 78 1304 82 1340 68 1380 78 1420 92 1430 86 1480 80 1500 82 1530 100 1560M84 1424l8 6-4 60-6 30 14 20 2 26M78 1424l10 40 0 50-6 16M96 1506l-6 20 10 14"/>
        </g>
        <g fill="#a36e51" stroke="#3c3230" stroke-width="1.100"><circle cx="658" cy="284" r="3.700"/><circle cx="608" cy="901" r="3.700"/><circle cx="589" cy="925" r="3.700"/><circle cx="591" cy="923" r="3.700"/><circle cx="555" cy="1080" r="3.700"/><circle cx="554" cy="1076" r="3.700"/></g>
      </svg>
    </div>
  </div>
  <footer class="status">
    <div class="locate"><svg viewBox="0 0 14 14"><circle cx="5.500" cy="5.500" r="4.300" fill="none" stroke="#aaa" stroke-width="1.300"/><path d="M8.500 8.500l4.500 4.500" stroke="#aaa" stroke-width="1.500"/></svg>Type to locate (Ctrl+K)</div>
    <span class="c1">oordinat</span><span class="field c2">80°, -70°</span>
    <svg class="c3" viewBox="0 0 16 16"><path d="M2 1l5 6M6 0l3 7M0 5l6 4M10 1l1 6M0 8l5 4" stroke="#ccc" stroke-width="1.400"/><circle cx="9.500" cy="11" r="4.500" fill="#ccc" stroke="#222"/><circle cx="9.500" cy="11" r="1.700" fill="#333"/><path d="M13 1l1 4" stroke="#eee"/></svg>
    <span class="c4">cal</span><span class="field c5">2067813888</span><i class="btn5 dd"></i>
    <svg class="c6" viewBox="0 0 12 16"><path d="M3 8V4a3 3 0 0 1 6 0v4" stroke="#ddd" stroke-width="1.800" fill="none"/><rect y="7" width="12" height="8.500" rx="1" fill="#777"/></svg>
    <span class="c7"><span>Magnifie</span></span><span class="field c8">100%</span><i class="spin"></i>
    <span class="c9">otatio</span><span class="field c10">0.0 °</span><i class="spin"></i>
    <span class="chk">✓</span><span class="c11">Render</span>
    <svg class="c12" viewBox="0 0 14 14"><circle cx="7" cy="7" r="6.500" fill="#bbb"/><path d="M.5 7h13M7 .5v13M2 3.500h10M2 10.500h10M7 .5q-6 6.500 0 13M7 .5q6 6.500 0 13" stroke="#333" stroke-width=".8" fill="none"/></svg><span class="c13">EPSG:4326</span>
    <svg class="c14" viewBox="0 0 18 16"><path d="M8 1c9-1 11 8 6 11l2 4-5-3C-1 14-1 2 8 1z" fill="#8b8b8b"/><path d="M4 7h2M8 7h2M12 7h2" stroke="#fff" stroke-width="2"/></svg>
    <svg class="sizer" viewBox="0 0 12 12"><path d="M10 0h2v2h-2zM10 3.300h2v2h-2zM10 6.600h2v2h-2zM10 10h2v2h-2zM6.700 3.300h2v2h-2zM6.700 6.600h2v2h-2zM6.700 10h2v2h-2zM3.300 6.600h2v2h-2zM3.300 10h2v2h-2zM0 10h2v2H0z" fill="#777"/></svg>
  </footer>
</section>

<section class="win gs">
  <div class="title"><span>Group Stats</span>
    <svg class="wbtns" viewBox="0 0 62 14"><path d="M1.500 4.500l5 5 5-5M25.500 9.500l5-5 5 5M49.500 2l9.500 10M59 2l-9.500 10"/></svg></div>
  <nav class="menu"><span><u>D</u>ata</span><span>Feat<u>u</u>res</span><span>W<u>i</u>ndow</span><span>Hel<u>p</u></span></nav>
  <div class="gsbody">
    <div class="table">
      <div class="cells">
        <b class="h h1">1<i class="dd"></i></b><b class="h">2</b>
        <b class="v">1<small></small></b><span class="p"></span><span class="p"></span>
        <b class="v">2</b><span class="p"></span><span class="p">8</span>
      </div>
    </div>
    <div class="vdots2"></div>
    <div class="ctrl">
      <div class="cp">Control panel<svg class="dbtn" viewBox="0 0 26 12"><g><rect x=".5" y=".5" width="10" height="11" rx="2"/><rect x="2.500" y="4.500" width="4.500" height="5"/><path d="M4.500 4.500v-2h4.500v5h-2"/><rect x="14.500" y=".5" width="10.500" height="11" rx="2"/><path d="M16.500 2.500l6.500 7M23 2.500l-6.500 7"/></g></svg></div>
      <div class="form">
        <div class="lab-layers">Layers</div>
        <div class="combo">Intersections<i class="dd"></i></div>
        <div class="lab-fields">Fields</div>
        <div class="list fields">
          <div><svg><use href="#g-pie"/></svg>cat</div><div><svg><use href="#g-pie"/></svg>cat_2</div>
          <div><svg><use href="#g-doc"/></svg>decription</div><div><svg><use href="#g-doc"/></svg>exsdesc</div><div><svg><use href="#g-doc"/></svg>f_code</div><div><svg><use href="#g-doc"/></svg>f_codedesc</div><div><svg><use href="#g-doc"/></svg>fcodesc</div>
          <div class="sel"><svg><use href="#g-pie"/></svg>gid</div><div><svg><use href="#g-pie"/></svg>gid_2</div><div><svg><use href="#g-pie"/></svg>length</div>
          <div><svg><use href="#g-bar"/></svg>average</div><div><svg><use href="#g-bar"/></svg>count</div><div><svg><use href="#g-bar"/></svg>max</div><div><svg><use href="#g-bar"/></svg>median</div><div><svg><use href="#g-bar"/></svg>min</div><div><svg><use href="#g-bar"/></svg>stand.dev.</div><div><svg><use href="#g-bar"/></svg>sum</div><div><svg><use href="#g-bar"/></svg>unique</div><div><svg><use href="#g-bar"/></svg>variance</div>
        </div>
        <div class="two labs"><span><button class="filter">Filter</button></span><span>Columns</span></div>
        <div class="two boxes"><div class="list"></div><div class="list"></div></div>
        <div class="two labs2"><span>Rows</span><span class="val">Value<i class="cb"></i>use NULL values</span></div>
        <div class="two boxes"><div class="list"></div><div class="list"><div><svg><use href="#g-pie"/></svg>gid</div><div><svg><use href="#g-bar"/></svg>count</div></div></div>
        <div class="only"><i class="cb"></i><span>Use only selected features</span><button class="clear">Clear</button></div>
        <button class="calc">Calculate</button>
      </div>
    </div>
  </div>
  <footer class="gsstatus">Calculate... 100% |&nbsp; generate view...100% |&nbsp; done.
    <svg class="sizer" viewBox="0 0 12 12"><path d="M10 0h2v2h-2zM10 3.300h2v2h-2zM10 6.600h2v2h-2zM10 10h2v2h-2zM6.700 3.300h2v2h-2zM6.700 6.600h2v2h-2zM6.700 10h2v2h-2zM3.300 6.600h2v2h-2zM3.300 10h2v2h-2zM0 10h2v2H0z" fill="#777"/></svg></footer>
</section>
</main>

<div class="dock">
  <svg class="moon" viewBox="0 0 27 27"><circle cx="13.500" cy="13.500" r="13.500" fill="#a3adac"/><path d="M4 8c3-5 8-4 13-4l-1 6c-3-1-4 0-3 4l-4 4c-4-2-2-5-5-6zM18 7c4 0 5 5 7 7l-1 6c-4-3-2-6-6-9z" fill="#74807f"/></svg>
  <svg class="arch" viewBox="0 0 36 36"><path d="M18 0C16 5 14.500 9 12 14c1.500 1.500 3 3 6 4-3-.5-5-2-6.500-3.500C9 20 6 27 .5 35.500c5-2.500 8-4 12.500-5 0-6 1.500-8 5-8s5 3 5 8c4.500 1 7.500 2.500 12.500 5-1-2-2-3.500-3-5.500-2-1-2.500-1.500-4-2 1.500 0 2 0 3 .5C25 16 20 5 18 0z" fill="url(#archG)"/></svg>
  <div class="pager"><b><svg><use href="#edge"/></svg></b><b><svg class="n"><use href="#vlc"/></svg></b><b class="act"><svg><use href="#qgis"/></svg><span><svg><use href="#qgis"/></svg></span></b><b><svg class="n"><use href="#pdf"/></svg></b></div>
  <div class="apps">
    <b><svg viewBox="0 0 28 28"><circle cx="14" cy="14" r="12.300" fill="none" stroke="#f4f2f1" stroke-width="3.200" stroke-dasharray="5.200 4.460"/><circle cx="14" cy="14" r="10.500" fill="#f4f2f1"/><circle cx="14" cy="14" r="5.500" fill="#23262b"/><circle cx="14" cy="14" r="4" fill="#1d8bf8"/></svg></b>
    <b><svg viewBox="0 0 28 28"><rect y="2" width="28" height="24" rx="2" fill="#504f52"/><path d="M0 4q0-2 2-2h8v5H0z" fill="#b9b9b9"/><path d="M10 2h8v5h-8z" fill="#8a8a8a"/><path d="M18 2h8q2 0 2 2v3H18z" fill="#666"/><path d="M11 11l6 5.500-6 5.500" stroke="#fff" stroke-width="1.500" fill="none"/></svg></b>
    <b><svg viewBox="0 0 28 28"><path d="M0 4q0-2 2-2h9l4 4H0z" fill="#e09c00"/><rect y="5" width="28" height="21" rx="1.500" fill="url(#folderG)"/><path d="M0 11h10l4-4H0z" fill="#e6a70f"/><path d="M5.500 26V15h17v11h-5v-5h-7v5z" fill="#0c7ae6"/><path d="M17.500 15h5v11h-5zM5.500 20l5 1v5h-5z" fill="#0a47b5"/></svg></b>
    <b class="run"><svg><use href="#edge"/></svg></b>
    <b><svg viewBox="0 0 28 28"><rect x="2" y="2" width="24" height="24" rx="3" fill="#e44332"/><path d="M2 8l5 3 9-5M2 13l5 3 9-5M2 18l5 3 9-5" stroke="#fff" stroke-width="1.800" fill="none"/></svg></b>
    <b><svg class="t" viewBox="0 0 26 34"><path d="M14 0L5 7l1 10-5 8 5 5 13 4 6-11-3-8 1-7z" fill="url(#obsG)"/><path d="M14 0l-2 19 9 14 4-10-3-8 1-7z" fill="#8350e8"/><path d="M6 17l6 2 1 13-7-2-5-5z" fill="#5b2bc0"/></svg></b>
    <b><svg viewBox="0 0 28 28"><circle cx="14" cy="14" r="14" fill="#2ea866"/><path d="M4 24A14 14 0 0 0 24 4z" fill="#1c9b58"/><path d="M7 9.500q8-2.500 14.500 1.500M7.500 14q7-2 12.500 1.500M8.500 18.300q5.500-1.500 10 1.200" stroke="#fff" stroke-width="2.600" fill="none" stroke-linecap="round"/></svg></b>
    <b><svg class="t" viewBox="0 0 30 30"><circle cx="15" cy="5" r="4.500" fill="#5b66d2"/><circle cx="24" cy="6" r="3.200" fill="#3f51b5"/><rect x="18" y="10" width="11" height="16" rx="2" fill="#3f51b5"/><rect x="8" y="10" width="15" height="17" rx="3" fill="#7684e8"/><rect y="7" width="14" height="14" rx="1" fill="#3d47b8"/><text x="3.200" y="18" font-size="12" font-weight="bold" font-family="Liberation Serif" fill="#fff">T</text><path d="M8 29L29 15v8l-9 6z" fill="#9d86e0"/></svg></b>
    <b class="run"><svg class="n"><use href="#vlc"/></svg></b>
    <b class="run hot"><svg class="t"><use href="#qgis"/></svg></b>
    <b class="run"><svg class="n"><use href="#pdf"/></svg></b>
  </div>
  <svg class="trash" viewBox="0 0 26 30"><path d="M1 4h24l-3 24q-9 3-18 0z" fill="#98959a"/><ellipse cx="13" cy="5" rx="12.500" ry="4.300" fill="#bdbdbf"/><ellipse cx="13" cy="5.500" rx="10.500" ry="3" fill="#a9a7ab"/><path d="M9 15l4-3 4 4M18 19l-2 5-4-1M8 18l0 5 3 1" stroke="#2c86c4" stroke-width="2.200" fill="none"/></svg>
  <svg class="user" viewBox="0 0 34 34"><circle cx="17" cy="17" r="17" fill="#e93a58"/><circle cx="17" cy="12" r="4" fill="none" stroke="#fff" stroke-width="1.400"/><path d="M9 25c0-9 16-9 16 0" fill="none" stroke="#fff" stroke-width="1.400"/></svg>
</div>
</body>
</html>
```
FILE: styles.css
```css
* { box-sizing: border-box; }
body {
  margin: 0; width: 1920px; height: 1200px; overflow: hidden;
  display: grid; grid-template-rows: 35px 1104px 9px 44px 8px;
  font-family: "Noto Sans", sans-serif; font-size: 13px; line-height: 20px; color: #dcdcdc;
}
.wallpaper { position: fixed; inset: 0; width: 1920px; height: 1200px; z-index: -1; }
b, i, em { font-style: normal; }
u { text-underline-offset: 2px; text-decoration-thickness: 1px; text-decoration-skip-ink: none; }
button { font: inherit; color: #dcdcdc; padding: 0; }

.panel { grid-row: 1; display: grid; grid-template-columns: 34px 98px 735px 513px 1fr; height: 27px; line-height: 27px; color: #d5d6de; font-size: 13px; }
.power { width: 20px; height: 20px; margin: 3px 0 0 5px; }
.sub { color: #c6c8d6; }
.date { font-size: 15px; white-space: nowrap; }
.tray { display: flex; margin-left: 9px; }
.meter { width: 60px; margin-right: 13px; font-size: 11px; line-height: 20px; white-space: nowrap; display: flex; flex-direction: column; }
.meter.cpu { width: 58px; margin-right: 12px; }
.meter i { height: 3px; margin-top: 3px; background: #6a6c9e; display: block; }
.meter em { display: block; height: 3px; background: #dedee6; }
.trayicons { width: 388px; height: 28px; flex: none; }

.desk { grid-row: 2; display: grid; grid-template-columns: 1069px 823px; column-gap: 8px; padding-left: 9px; }
.win { background: #1a1a1a; border-radius: 7px 7px 5px 5px; overflow: hidden; box-shadow: 0 0 14px rgba(0,0,0,.5); display: flex; flex-direction: column; height: 1104px; border-left: 1px solid #2c2c2c; border-right: 1px solid #2c2c2c; }
.title { height: 28px; flex: none; background: #333; border-top: 1px solid #4a4a4a; display: grid; grid-template-columns: 74px 1fr 74px; align-items: center; text-align: center; line-height: 24px; padding-bottom: 2px; }
.title span { grid-column: 2; }
.title.dim { background: #434343; color: #7d7d7d; border-color: #555; }
.wbtns { width: 62px; height: 14px; margin-left: 1px; }
.wbtns path { fill: none; stroke: #ddd; stroke-width: 1.200; }
.dim .wbtns path { stroke: #8b8b8b; }
.dim .wbtns { margin-left: 0; }
.menu { height: 23px; flex: none; display: flex; gap: 14.8px; padding: 1px 0 0 11.5px; line-height: 22px; }
.gs .menu { padding-left: 11px; }

.bar { height: 39px; flex: none; display: flex; align-items: center; border-top: 1px solid #6d6d6d; }
.bar svg { width: 24px; height: 24px; margin: 0 4.500px; flex: none; display: block; }
.bar .on { width: 29px; height: 30px; margin: 0 2px; border: 1px solid #777; border-radius: 3px; background: #4d4d4d; flex: none; }
.bar .on svg { margin: 2px 1.500px; }
.grip { width: 5px; height: 20px; margin: 0 2.800px 0 8.600px; flex: none; background: radial-gradient(circle at 1.200px 1.200px, #777 .9px, transparent 1.200px) 0 0 / 3px 3.200px; }
.grip.first { margin-left: 6px; margin-right: 2.500px; }
.grip.snug { margin: 0 2.200px 0 7.800px; }
.dd { width: 8px; height: 5px; margin: 0 2.200px; background: #9a9a9a; clip-path: polygon(0 0, 100% 0, 50% 100%); flex: none; display: block; }
.dd.off { background: #4a4a4a; margin: 0 1.800px; }
.more { color: #555; font-size: 17px; line-height: 20px; }
.m1 { margin-left: 19px; }
.m2 { margin-left: 26px; margin-right: 0; }
.bar svg.wide { margin-left: 11px; margin-right: 0; width: 25px; }
.m2 ~ svg { margin-left: 6px; margin-right: 5px; }
.m2 ~ .grip { margin-left: 5px; margin-right: 4px; }
.bar svg.last { margin-right: 0; }

.work { display: flex; height: 938px; flex: none; border-top: 1px solid #101010; }
aside { width: 295px; flex: none; display: flex; flex-direction: column; }
.dockhead { height: 19px; line-height: 19px; padding: 0 2px 0 5px; display: flex; justify-content: space-between; align-items: center; flex: none; }
.dbtn { width: 26px; height: 12px; }
.dbtn g { fill: none; stroke: #8d8d8d; stroke-width: 1.100; }
.dockhead.lay { height: 24px; line-height: 24px; }
.minibar { display: flex; align-items: center; height: 31px; margin-bottom: 2px; padding-left: 8.500px; gap: 9.200px; flex: none; }
.minibar svg { width: 16px; height: 16px; }
.minibar.lay { height: 29px; margin: 0; padding-left: 9px; padding-bottom: 3px; gap: 9.300px; }
.minibar .dd { margin: 0 -2px 0 -4px; }
.browser { height: 315px; margin-left: 2px; background: #141414; display: flex; overflow: hidden; flex: none; }
.tree { flex: 1; height: 315px; overflow: hidden; }
.r { height: 20px; display: flex; align-items: center; white-space: pre; }
.r svg { width: 16px; height: 16px; margin: 0 6px 0 3px; }
.r::before { content: ""; width: 16px; height: 8px; flex: none; }
.r.c::before { background: #8f8f8f; clip-path: polygon(40% 0, 66% 50%, 40% 100%); }
.r.o::before { background: #8f8f8f; height: 5px; clip-path: polygon(25% 0, 75% 0, 50% 100%); }
.in1 { padding-left: 16px; } .in2 { padding-left: 32px; } .in3 { padding-left: 48px; } .in4 { padding-left: 64px; }
.sel { background: #2d2340; }
.r.sel { width: 197px; }
.scroll { width: 14px; margin-right: 1px; background: #575757; display: flex; flex-direction: column; }
.scroll b { height: 14px; border: 1px solid #7a7a7a; background: #5f5f5f; }
.scroll b::before { content: ""; display: block; width: 8px; height: 5px; margin: 4px auto; background: #aaa; clip-path: polygon(50% 0, 100% 100%, 0 100%); }
.scroll .down { margin-top: auto; }
.scroll .down::before { clip-path: polygon(0 0, 100% 0, 50% 100%); }
.scroll i { height: 166px; margin-top: 32px; background: #666; border: 1px solid #858585; outline: 1px solid #222; }
.hdots { height: 5px; width: 18px; margin-left: 141px; background: radial-gradient(circle, #777 1px, transparent 1.200px) 0 2px / 3px 3px repeat-x; flex: none; }
.layers { flex: 1; margin-left: 2px; width: 292px; background: #141414; padding-top: 1px; }
.y { height: 20px; display: flex; align-items: center; padding-left: 23px; font-weight: bold; font-style: italic; color: #7f7f7f; font-size: 13.05px; }
.y s { width: 14px; height: 14px; margin-right: 6px; text-decoration: none; font-style: normal; font-weight: normal; font-size: 14px; line-height: 14px; text-align: center; color: #eee; font-family: "DejaVu Sans", sans-serif; }
.y.on { font-style: normal; color: #ededed; }
.cur { background: #2d2340; }
.cur s { background: #151515; }
.cur span { text-decoration: underline; text-underline-offset: 3px; }
.pt { width: 6px; height: 6px; border-radius: 50%; margin: 0 11px 0 5px; }
.ln { width: 14px; height: 2px; margin-right: 6px; }
.sq { width: 16px; height: 16px; margin-right: 6px; border: 1px solid rgba(0,0,0,.3); }
.y svg { width: 16px; height: 16px; margin-right: 6px; }
.y em { width: 16px; height: 16px; margin: 0 7px 0 auto; border-radius: 2px; background: #1a1a1a; display: grid; place-items: center; }
.y em::before { content: ""; width: 10px; height: 5px; border: 1px solid #303030; border-bottom-color: #252525; }
.cur em { background: #161616; }
.tree1 { padding-left: 8px; }
.tree1::before { content: ""; width: 5px; height: 8px; margin-right: 10px; background: #8f8f8f; clip-path: polygon(0 0, 100% 50%, 0 100%); }
.vdots { width: 7px; flex: none; align-self: flex-start; height: 18px; margin-top: 461px; background: radial-gradient(circle, #777 1px, transparent 1.200px) 2px 0 / 3px 3px repeat-y; }
.canvas { width: 763px; background: #fff; display: flex; flex-direction: column; }
.msg { height: 41px; flex: none; background: #dff0d8; border: 1px solid #7d9a77; color: #111; display: flex; align-items: center; line-height: 36px; padding-bottom: 2px; white-space: pre; }
.msg .ok { width: 24px; height: 19px; margin: 0 9px 0 9px; }
.msg b { font-size: 13.050px; }
.msg u { color: #2a8a0f; font-size: 12.950px; }
.msg .x { width: 18px; height: 18px; margin-left: auto; margin-right: 22px; }
.map { width: 762px; height: 896px; display: block; }
.map path { vector-effect: non-scaling-stroke; }

.status { display: flex; align-items: center; height: 37px; padding-left: 5px; padding-bottom: 3px; font-size: 11.7px; white-space: nowrap; }
.status > * { flex: none; }
.locate { width: 235px; height: 26px; background: #141414; border-radius: 4px; display: flex; align-items: center; gap: 8px; padding-left: 8px; color: #808080; font-size: 13px; }
.locate svg { width: 13px; height: 13px; }
.field { background: #141414; height: 25px; line-height: 25px; border-radius: 3px; }
.c1 { width: 46px; margin-left: 50px; }
.c2 { width: 70px; margin-left: 1px; text-align: center; }
.c3 { width: 16px; height: 16px; margin-left: 4px; }
.c4 { margin-left: 12px; width: 18px; }
.c5 { width: 68px; margin-left: -1px; padding-left: 1px; letter-spacing: -.2px; }
.status .btn5 { width: 19px; height: 25px; margin: 0; background: #666; border: 1px solid #888; clip-path: none; display: grid; place-items: center; }
.btn5::before { content: ""; width: 8px; height: 4px; background: #bbb; clip-path: polygon(0 0, 100% 0, 50% 100%); }
.c6 { width: 12px; height: 16px; margin-left: 13px; }
.c7 { width: 38px; margin-left: 9px; overflow: hidden; }
.c7 span { margin-left: -8.500px; letter-spacing: -.15px; }
.c8 { width: 76px; margin-left: 2px; padding-left: 5px; }
.spin { width: 13px; height: 24px; background: #5f5f5f; border: 1px solid #777; display: flex; flex-direction: column; justify-content: space-around; align-items: center; }
.spin::before, .spin::after { content: ""; width: 8px; height: 4px; background: #bbb; clip-path: polygon(50% 0, 100% 100%, 0 100%); }
.spin::after { clip-path: polygon(0 0, 100% 0, 50% 100%); }
.c9 { width: 33px; margin-left: 10px; letter-spacing: -.2px; }
.c10 { width: 76px; margin-left: 6px; padding-left: 4px; }
.chk { width: 13px; margin-left: 8px; height: 14px; font: 13px/14px "DejaVu Sans", sans-serif; background: #141414; color: #eee; }
.c11 { width: 54px; margin-left: 6px; }
.c12 { width: 14px; height: 14px; }
.c13 { width: 55px; margin-left: 3px; }
.c14 { width: 18px; height: 16px; margin-left: 22px; }
.sizer { width: 12px; height: 12px; margin-left: auto; margin-right: 3px; align-self: flex-end; }
.status .sizer { margin-bottom: 1px; margin-right: 2px; }

.gsbody { display: flex; height: 1017px; flex: none; border-top: 1px solid #141414; }
.table { width: 493px; height: 1007px; margin: 9px 0 0 11px; flex: none; border: 1px solid #141414; border-width: 1px 0; background: linear-gradient(#1a1a1a, #1a1a1a) 0 0 / 100% 22px no-repeat, linear-gradient(#1a1a1a, #1a1a1a) 0 0 / 12px 100% no-repeat, #141414; }
.cells { display: grid; grid-template-columns: 11px 40px 40px; grid-template-rows: 21px 29px 29px; gap: 1px; width: 94px; }
.h { background: linear-gradient(#666, #555); text-align: center; line-height: 20px; border-top: 1px solid #777; }
.h1 { grid-column: 1 / 3; border-right: 1px solid #777; display: flex; align-items: center; justify-content: flex-end; gap: 10px; }
.h1 .dd { margin-right: 4px; margin-top: -4px; width: 7px; }
.v { background: #5c5c5c; border-top: 1px solid #777; text-align: center; line-height: 19px; }
.v:not(:has(small)) { line-height: 29px; }
.v small { display: block; width: 3px; height: 2px; margin: 0 auto; background: #999; }
.p { background: #54417d; text-align: right; padding-right: 3px; line-height: 29px; color: #eee; }
.vdots2 { width: 3px; height: 17px; margin: 506px 0 0 10.500px; background: radial-gradient(circle, #777 1px, transparent 1.200px) 0 0 / 3px 3px repeat-y; flex: none; }
.ctrl { margin-left: 5px; width: 297px; padding-top: 1px; }
.cp { height: 18px; line-height: 18px; display: flex; justify-content: space-between; align-items: center; padding-left: 1px; }
.form { margin-left: 5.500px; width: 284px; }
.lab-layers { margin-top: 8px; height: 26px; line-height: 22px; }
.combo { height: 25px; margin: 0 1px; border: 1px solid #888; border-radius: 2px; background: linear-gradient(#6c6c6c, #5a5a5a); line-height: 22px; padding: 0 4px; display: flex; align-items: center; justify-content: space-between; }
.lab-fields { margin-top: 5px; height: 26px; line-height: 22px; }
.list { background: #141414; padding-top: 1px; }
.list > div { height: 26px; display: flex; align-items: center; margin: 0 1px; }
.list svg { width: 22px; height: 22px; margin: 0 7px 0 4px; }
.fields { height: 558px; }
.two { display: grid; grid-template-columns: 112px 166px; column-gap: 6px; align-items: center; }
.labs { height: 37px; }
.labs2 { height: 36px; }
.boxes { height: 106px; align-items: stretch; }
button { border: 1px solid #888; border-radius: 2px; background: linear-gradient(#6c6c6c, #5a5a5a); display: block; }
.filter { width: 44px; height: 23px; margin-left: 1px; }
.cb { width: 14px; height: 14px; background: #141414; display: block; flex: none; }
.val { display: flex; align-items: center; white-space: nowrap; }
.val .cb { margin: 0 5px 0 7px; }
.only { display: flex; align-items: center; height: 25px; margin-top: 6px; }
.only span { margin-left: 5px; flex: 1; }
.clear { width: 78px; height: 25px; margin-right: 1px; }
.calc { width: 282px; height: 25px; margin: 7px 1px 0; }
.gsstatus { display: flex; height: 36px; padding-left: 7px; line-height: 42px; white-space: pre; font-size: 13px; }
.gsstatus .sizer { margin-bottom: 5px; margin-right: 2px; }

.dock { grid-row: 4; margin: 0 8px; border-radius: 6px; background: rgba(28,28,34,.72); display: flex; align-items: center; }
.moon { width: 27px; height: 27px; margin-left: 12px; }
.arch { width: 36px; height: 36px; margin-left: 491px; }
.pager { display: flex; margin-left: 9px; gap: 1px; }
.pager b { width: 57px; height: 35px; border: 1px solid #8f7f84; background: rgba(150,140,145,.45); display: grid; place-items: center; }
.pager svg { width: 15px; height: 17px; }
.pager .act { background: #735489; border-color: #6a4c9c; grid-template-columns: 31px 24px; }
.act span { width: 24px; height: 33px; border: 1px solid #a78fc8; background: #816ba4; display: grid; place-items: center; }
.act svg { opacity: .35; }
.apps { display: flex; margin-left: 4px; }
.apps b { width: 47px; height: 44px; display: grid; place-items: center; position: relative; }
.apps svg { width: 28px; height: 28px; }
.apps svg.t { width: 30px; height: 32px; }
.apps svg.n { width: 25px; height: 29px; }
.run::after { content: ""; position: absolute; width: 13px; height: 3px; left: 17px; bottom: 2px; border-radius: 2px; background: #9b8f9b; }
.hot { background: linear-gradient(rgba(120,110,120,.5), rgba(120,110,120,.5)) center / 42px 40px no-repeat; }
.apps .hot::after { content: "+"; width: 12px; height: 12px; left: 17px; bottom: -1px; border-radius: 50%; background: #fff; color: #222; font: bold 13px/11px "Noto Sans"; text-align: center; }
.trash { width: 26px; height: 30px; margin-left: 22px; }
.user { width: 34px; height: 34px; margin-left: auto; margin-right: 4px; }
```
